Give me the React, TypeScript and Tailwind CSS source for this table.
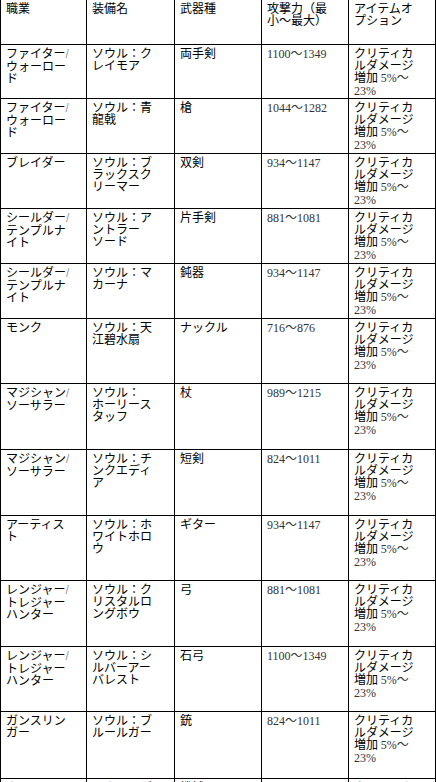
import React from "react";

type Row = { job: string[]; name: string; weapon: string; atk: string };

const rows: Row[] = [
  { job: ["ファイター", "ウォーロード"], name: "ソウル：クレイモア", weapon: "両手剣", atk: "1100〜1349" },
  { job: ["ファイター", "ウォーロード"], name: "ソウル：青龍戟", weapon: "槍", atk: "1044〜1282" },
  { job: ["ブレイダー"], name: "ソウル：ブラックスクリーマー", weapon: "双剣", atk: "934〜1147" },
  { job: ["シールダー", "テンプルナイト"], name: "ソウル：アントラーソード", weapon: "片手剣", atk: "881〜1081" },
  { job: ["シールダー", "テンプルナイト"], name: "ソウル：マカーナ", weapon: "鈍器", atk: "934〜1147" },
  { job: ["モンク"], name: "ソウル：天江碧水扇", weapon: "ナックル", atk: "716〜876" },
  { job: ["マジシャン", "ソーサラー"], name: "ソウル：ホーリースタッフ", weapon: "杖", atk: "989〜1215" },
  { job: ["マジシャン", "ソーサラー"], name: "ソウル：チンクエディア", weapon: "短剣", atk: "824〜1011" },
  { job: ["アーティスト"], name: "ソウル：ホワイトホロウ", weapon: "ギター", atk: "934〜1147" },
  { job: ["レンジャー", "トレジャーハンター"], name: "ソウル：クリスタルロングボウ", weapon: "弓", atk: "881〜1081" },
  { job: ["レンジャー", "トレジャーハンター"], name: "ソウル：シルバーアーバレスト", weapon: "石弓", atk: "1100〜1349" },
  { job: ["ガンスリンガー"], name: "ソウル：ブルールガー", weapon: "銃", atk: "824〜1011" },
  { job: ["ウォーリアー"], name: "ソウル：ゲイボルグ", weapon: "機械弓", atk: "1044〜1282" },
];

const cell = "border-r border-b border-black pl-[5px] pt-[2px] overflow-hidden";
const serif = "font-['Liberation_Serif','Noto_Sans_CJK_JP',serif] text-[#333]";

function Job({ parts }: { parts: string[] }) {
  return (
    <>
      {parts.map((p, i) => (
        <React.Fragment key={i}>
          {i > 0 && <span className="font-['Liberation_Sans',sans-serif] text-[#999]">/</span>}
          {p}
        </React.Fragment>
      ))}
    </>
  );
}

export default function App() {
  return (
    <div
      lang="ja"
      className="bg-white w-[436px] h-[782px] overflow-hidden text-black font-['Noto_Sans_CJK_JP',sans-serif] text-[12px] leading-[12px] [line-break:strict]"
    >
      <div className="grid grid-cols-[86px_88px_87px_87px_87px] grid-rows-[45px_54px_55px_55px_55px_55px_65px_66px_66px_65px_66px_65px_67px_40px] border-l border-black">
        <div className={cell}><div className="w-[68px]">職業</div></div>
        <div className={cell}><div className="w-[68px]">装備名</div></div>
        <div className={cell}><div className="w-[68px]">武器種</div></div>
        <div className={cell}><div className="w-[68px]">攻撃力（最小〜最大）</div></div>
        <div className={cell}><div className="w-[68px]">アイテムオプション</div></div>
        {rows.map((r, i) => (
          <React.Fragment key={i}>
            <div className={cell}>
              <div className="w-[68px]"><Job parts={r.job} /></div>
            </div>
            <div className={cell}><div className="w-[68px]">{r.name}</div></div>
            <div className={cell}><div className="w-[68px]">{r.weapon}</div></div>
            <div className={cell}>
              <div className="w-[68px]"><span className={serif}>{r.atk}</span></div>
            </div>
            <div className={cell}>
              <div className="w-[68px]">
                クリティカルダメージ増加 <span className={serif}>5%〜23%</span>
              </div>
            </div>
          </React.Fragment>
        ))}
      </div>
    </div>
  );
}
